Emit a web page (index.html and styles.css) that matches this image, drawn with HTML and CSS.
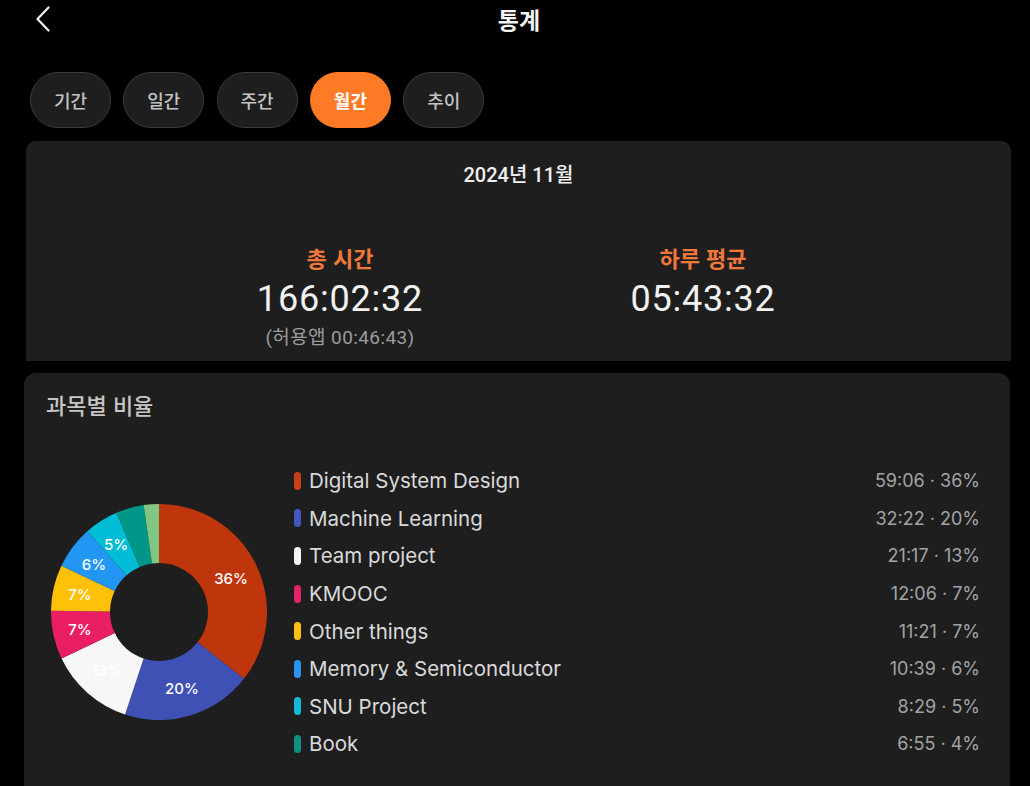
FILE: index.html
```html
<!DOCTYPE html>
<html lang="ko">
<head>
<meta charset="utf-8">
<title>통계</title>
<link rel="stylesheet" href="styles.css">
</head>
<body>
<header class="topbar">
  <button class="back" aria-label="뒤로">
    <svg width="16" height="26" viewBox="0 0 16 26"><path d="M13.5 1.5 L2.5 13 L13.5 24.5" fill="none" stroke="#f2f2f2" stroke-width="2.2" stroke-linecap="round" stroke-linejoin="round"/></svg>
  </button>
  <h1 class="title">통계</h1>
  <span class="spacer"></span>
</header>

<nav class="tabs">
  <button class="tab">기간</button>
  <button class="tab">일간</button>
  <button class="tab">주간</button>
  <button class="tab active">월간</button>
  <button class="tab">추이</button>
</nav>

<section class="summary">
  <div class="month">2024년 11월</div>
  <div class="stats">
    <div class="stat">
      <div class="stat-label">총 시간</div>
      <div class="stat-value">166:02:32</div>
      <div class="stat-sub">(허용앱 00:46:43)</div>
    </div>
    <div class="stat">
      <div class="stat-label">하루 평균</div>
      <div class="stat-value">05:43:32</div>
    </div>
  </div>
</section>

<section class="ratio">
  <h2 class="ratio-title">과목별 비율</h2>
  <div class="ratio-body">
    <svg class="donut" width="216" height="216" viewBox="0 0 216 216">
      <g class="donut-ring" fill="none" stroke-width="59">
        <path stroke="#bf360c" d="M108 29.5 A78.5 78.5 0 0 1 169.73 156.49"/>
        <path stroke="#3f51b5" d="M169.73 156.49 A78.5 78.5 0 0 1 83.33 182.52"/>
        <path stroke="#f7f7f7" d="M83.33 182.52 A78.5 78.5 0 0 1 37.16 141.82"/>
        <path stroke="#e91e63" d="M37.16 141.82 A78.5 78.5 0 0 1 29.50 107.01"/>
        <path stroke="#ffc107" d="M29.50 107.01 A78.5 78.5 0 0 1 37.05 74.40"/>
        <path stroke="#2196f3" d="M37.05 74.40 A78.5 78.5 0 0 1 55.90 49.28"/>
        <path stroke="#00bcd4" d="M55.90 49.28 A78.5 78.5 0 0 1 77.10 35.84"/>
        <path stroke="#009688" d="M77.10 35.84 A78.5 78.5 0 0 1 96.85 30.29"/>
        <path stroke="#81c784" d="M96.85 30.29 A78.5 78.5 0 0 1 108 29.5"/>
      </g>
      <g class="donut-labels">
        <text x="180" y="74">36%</text>
        <text x="131" y="184">20%</text>
        <text x="56" y="166">13%</text>
        <text x="29" y="125">7%</text>
        <text x="29" y="90">7%</text>
        <text x="43" y="60">6%</text>
        <text x="65" y="40">5%</text>
      </g>
    </svg>
    <ul class="legend">
      <li class="row"><span class="mark c1"></span><span class="name">Digital System Design</span><span class="val">59:06 · 36%</span></li>
      <li class="row"><span class="mark c2"></span><span class="name">Machine Learning</span><span class="val">32:22 · 20%</span></li>
      <li class="row"><span class="mark c3"></span><span class="name">Team project</span><span class="val">21:17 · 13%</span></li>
      <li class="row"><span class="mark c4"></span><span class="name">KMOOC</span><span class="val">12:06 · 7%</span></li>
      <li class="row"><span class="mark c5"></span><span class="name">Other things</span><span class="val">11:21 · 7%</span></li>
      <li class="row"><span class="mark c6"></span><span class="name">Memory &amp; Semiconductor</span><span class="val">10:39 · 6%</span></li>
      <li class="row"><span class="mark c7"></span><span class="name">SNU Project</span><span class="val">8:29 · 5%</span></li>
      <li class="row"><span class="mark c8"></span><span class="name">Book</span><span class="val">6:55 · 4%</span></li>
    </ul>
  </div>
</section>
</body>
</html>
```

FILE: styles.css
```css
* { box-sizing: border-box; }

html, body {
  margin: 0;
  padding: 0;
  background: #000;
  height: 786px;
  overflow: hidden;
}

body {
  font-family: Inter, "Noto Sans CJK KR", "Noto Sans", sans-serif;
  color: #eee;
}

.topbar {
  display: grid;
  grid-template-columns: 1fr auto 1fr;
  align-items: center;
  height: 38px;
  padding: 0 35px;
}

.back {
  justify-self: start;
  background: none;
  border: 0;
  padding: 0;
  width: 16px;
  height: 26px;
  display: flex;
}

.title {
  margin: 0;
  font-family: "Noto Sans CJK KR", sans-serif;
  font-size: 23px;
  font-weight: 700;
  color: #f4f4f4;
  line-height: 30px;
  position: relative;
  left: 4px;
}

.tabs {
  display: flex;
  gap: 12.3px;
  padding-left: 30px;
  margin-top: 34px;
}

.tab {
  width: 81px;
  height: 56px;
  border-radius: 28px;
  border: 1px solid #3b3b3b;
  background: #1e1e1f;
  color: #c4c4c4;
  font-family: "Noto Sans CJK KR", sans-serif;
  font-size: 18px;
  font-weight: 500;
  padding: 0;
}

.tab.active {
  background: #ff7a24;
  border-color: #ff7a24;
  color: #fff;
  font-weight: 700;
}

.summary {
  margin: 13px 19px 0 26px;
  height: 220px;
  background: #1e1e1f;
  border-radius: 10px 10px 0 0;
  padding-top: 21px;
  display: flex;
  flex-direction: column;
  align-items: center;
}

.month {
  font-family: Roboto, "Noto Sans CJK KR", sans-serif;
  font-size: 20px;
  font-weight: 500;
  line-height: 26px;
  color: #f0f0f0;
}

.stats {
  display: flex;
  gap: 103px;
  margin-top: 54px;
  position: relative;
  left: 3px;
}

.stat {
  width: 260px;
  display: flex;
  flex-direction: column;
  align-items: center;
}

.stat-label {
  font-family: "Noto Sans CJK KR", sans-serif;
  font-size: 22px;
  font-weight: 700;
  line-height: 30px;
  color: #f0793a;
}

.stat-value {
  margin-top: 5px;
  font-family: Roboto, sans-serif;
  font-size: 36px;
  line-height: 44px;
  color: #f2f2f2;
  letter-spacing: 0.8px;
}

.stat-sub {
  margin-top: 5px;
  font-family: Roboto, "Noto Sans CJK KR", sans-serif;
  font-size: 19px;
  line-height: 24px;
  color: #9c9c9c;
  letter-spacing: 0.4px;
}

.ratio {
  margin: 12px 20px 0 24px;
  height: 440px;
  background: #1e1e1f;
  border-radius: 12px 12px 0 0;
  padding: 16px 30px 0 22px;
}

.ratio-title {
  margin: 0;
  font-family: "Noto Sans CJK KR", sans-serif;
  font-size: 22px;
  font-weight: 500;
  line-height: 30px;
  color: #c6c6c6;
}

.ratio-body {
  display: flex;
  align-items: center;
  gap: 27px;
  margin-top: 43px;
  padding-left: 5px;
}

.donut {
  flex: none;
  display: block;
}

.donut-labels text {
  font-family: Inter, sans-serif;
  font-size: 15px;
  font-weight: 500;
  fill: #fff;
  text-anchor: middle;
  dominant-baseline: central;
}

.legend {
  flex: 1;
  list-style: none;
  margin: 0;
  padding: 0;
}

.row {
  display: flex;
  align-items: center;
  height: 37.6px;
}

.mark {
  width: 7px;
  height: 18px;
  border-radius: 4px;
  margin-right: 8px;
  flex: none;
}

.c1 { background: #c8401a; }
.c2 { background: #4456c0; }
.c3 { background: #f5f5f5; }
.c4 { background: #e6236a; }
.c5 { background: #fbbf16; }
.c6 { background: #2a95ef; }
.c7 { background: #14bad3; }
.c8 { background: #0f9284; }

.name {
  flex: 1;
  font-size: 20.5px;
  color: #dadada;
}

.val {
  font-size: 18px;
  color: #a3a3a3;
}
```
